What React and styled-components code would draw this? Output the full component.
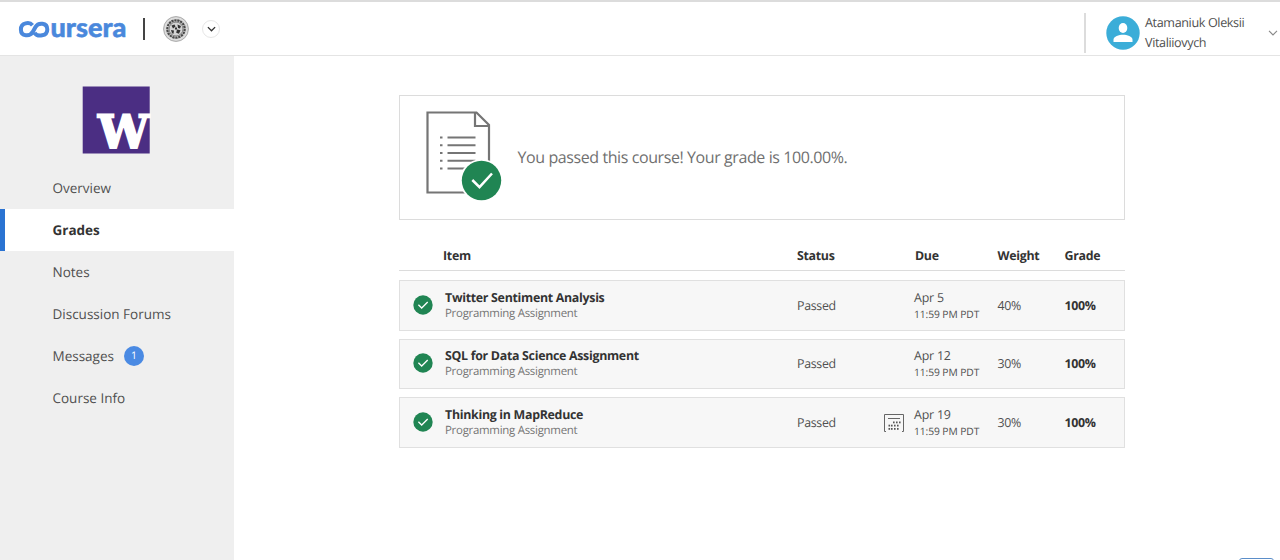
import React from 'react';
import styled, { createGlobalStyle } from 'styled-components';

const GlobalStyle = createGlobalStyle`
  * { box-sizing: border-box; }
  body {
    margin: 0;
    background: #fff;
    color: #505050;
    font-family: "Open Sans", "Noto Sans", sans-serif;
    text-rendering: geometricPrecision;
    overflow: hidden;
  }
  svg { display: block; flex: none; overflow: visible; }
`;

const Page = styled.div`
  height: 560px;
  display: flex;
  flex-direction: column;
  overflow: hidden;
`;

const Header = styled.header`
  flex: none;
  height: 56px;
  display: flex;
  align-items: flex-start;
  border-top: 2px solid #dcdcdc;
  border-bottom: 1px solid #e4e4e4;
`;

const Brand = styled.div`
  display: flex;
  align-items: center;
  padding: 14px 0 0 18px;
  height: 40px;
`;

const Divider = styled.span`
  width: 2px;
  height: 22px;
  margin: 0 18px 0 11px;
  background: #444;
`;

const RoundButton = styled.button`
  width: 18px;
  height: 18px;
  margin-left: 13px;
  padding: 0;
  display: flex;
  align-items: center;
  justify-content: center;
  border: 1px solid #e6e6e6;
  border-radius: 50%;
  background: #fff;
`;

const Account = styled.div`
  margin: 11px 0 0 auto;
  width: 196px;
  height: 40px;
  padding-left: 20px;
  display: flex;
  align-items: center;
  border-left: 2px solid #dcdcdc;
`;

const AccountName = styled.div`
  width: 123px;
  margin: 0 0 0 5px;
  font-size: 12.6px;
  letter-spacing: -0.37px;
  line-height: 20px;
`;

const Body = styled.div`
  flex: 1;
  min-height: 0;
  display: flex;
`;

const Sidebar = styled.aside`
  flex: none;
  width: 234px;
  padding-top: 30px;
  background: #efefef;
`;

const SchoolLogo = styled.div`
  width: 68px;
  margin: 0 0 13px 82px;
`;

const NavItem = styled.a`
  height: 42px;
  padding-left: ${(p) => (p.$active ? 47.5 : 52.5)}px;
  display: flex;
  align-items: center;
  border-left: ${(p) => (p.$active ? '5px solid #2a73d2' : 'none')};
  background: ${(p) => (p.$active ? '#fff' : 'transparent')};
  color: ${(p) => (p.$active ? '#333' : '#505050')};
  font-size: 13.5px;
  font-weight: ${(p) => (p.$active ? 700 : 400)};
`;

const Count = styled.span`
  width: 20px;
  height: 20px;
  margin-left: 10px;
  display: flex;
  align-items: center;
  justify-content: center;
  border-radius: 50%;
  background: #4a8ae3;
  color: #fff;
  font-size: 10.5px;
`;

const Main = styled.main`
  flex: none;
  width: 726px;
  margin-left: 165px;
  padding-top: 39px;
`;

const Banner = styled.section`
  height: 125px;
  display: flex;
  align-items: center;
  padding: 0 0 5px 25px;
  border: 1px solid #dcdcdc;
`;

const BannerText = styled.p`
  margin: 3px 0 0 14.5px;
  color: #707070;
  font-size: 16px;
  letter-spacing: -0.41px;
`;

const columns = '45px 352px 87px 30px 83.5px 67px 1fr';

const TableHead = styled.div`
  height: 51px;
  padding: 26px 0 0 1px;
  display: grid;
  grid-template-columns: ${columns};
  border-bottom: 1px solid #dcdcdc;
  color: #333;
  font-size: 12.4px;
  font-weight: 700;
  letter-spacing: -0.3px;
  line-height: 20px;
`;

const HeadCell = styled.span`
  grid-column: ${(p) => p.$column};
  margin-left: ${(p) => p.$shift || 0}px;
`;

const Rows = styled.div`
  padding-top: 9px;
  display: flex;
  flex-direction: column;
  gap: 8px;
`;

const Row = styled.div`
  height: 50.65px;
  display: grid;
  grid-template-columns: ${columns};
  align-items: center;
  border: 1px solid #e0e0e0;
  background: #f7f7f7;
  font-size: 12.4px;
  letter-spacing: -0.3px;
`;

const StatusIcon = styled.div`
  padding: 0 0 1px 12.5px;
`;

const Title = styled.div`
  color: #333;
  font-weight: 700;
  line-height: 17px;
`;

const Kind = styled.div`
  color: #757575;
  font-size: 11.45px;
  letter-spacing: -0.27px;
  line-height: 16px;
`;

const Due = styled.div`
  padding-top: 2px;
`;

const DueDate = styled.div`
  letter-spacing: -0.2px;
  line-height: 18px;
`;

const DueTime = styled.div`
  font-size: 10.3px;
  letter-spacing: -0.1px;
  line-height: 17px;
`;

const Grade = styled.span`
  color: #333;
  font-weight: 700;
`;

const HelpButton = styled.button`
  position: fixed;
  left: 1239px;
  top: 558px;
  width: 35px;
  height: 24px;
  padding: 0;
  border: 1px solid #5b8ec9;
  border-radius: 3px;
  background: #fff;
`;

function Wordmark() {
  return (
    <svg width="114" height="32" viewBox="0 -4 114 32">
      <path
        d="M14.500 8.200C11.500 4.700 2.900 5.500 2.900 12.400c0 7.300 9.200 7.500 12.100 2.100l2.500-4.500c2.900-5 11.800-4.400 11.800 2.400 0 6.900-9.800 7.800-12.800 3.400"
        fill="none"
        stroke="#4a88dc"
        strokeWidth="4"
      />
      <text
        x="32.500"
        y="19.500"
        fill="#4a88dc"
        stroke="#4a88dc"
        strokeWidth=".5"
        fontFamily="Lato"
        fontWeight="900"
        fontSize="26.500"
        textLength="76"
        lengthAdjust="spacingAndGlyphs"
      >
        ursera
      </text>
    </svg>
  );
}

function Seal() {
  return (
    <svg width="26" height="26" viewBox="0 0 26 26">
      <circle cx="13" cy="13" r="12.4" fill="#dcdcdc" stroke="#aaa" strokeWidth="1" />
      <circle cx="13" cy="13" r="8.7" fill="none" stroke="#4a4a4a" strokeWidth="2.2" strokeDasharray="2.3 .7" />
      <circle cx="13" cy="13" r="7" fill="#d4d4d4" stroke="#666" strokeWidth=".8" />
      <path
        d="M8.5 9.5l3-1 1 2-2.5 2zM14.5 8.5l3.5 1.5-1 2.5-2-.5zM8 14l3 .5-.5 3.2-1.5-.4zM14 13.5l3.5.8-1.5 3.5-2.8-1zM12 11.5h2v2h-2z"
        fill="#333"
      />
    </svg>
  );
}

function Avatar() {
  return (
    <svg width="34" height="34" viewBox="0 0 34 34">
      <circle cx="17" cy="17" r="16.7" fill="#3badd8" />
      <ellipse cx="17" cy="12" rx="4.3" ry="5" fill="#fff" />
      <path d="M7.5 26v-2.2c0-3.2 5.4-5 9.5-5s9.5 1.8 9.5 5V26z" fill="#fff" />
    </svg>
  );
}

function Chevron({ color, width = 9, weight = 1.5 }) {
  return (
    <svg width={width} height="6" viewBox="0 0 10 6" fill="none" stroke={color} strokeWidth={weight}>
      <path d="M1 .9l4 4 4-4" />
    </svg>
  );
}

function CheckCircle({ size }) {
  return (
    <svg width={size} height={size} viewBox="0 0 20 20">
      <circle cx="10" cy="10" r="9.7" fill="#208553" />
      <path d="M5.4 9.7l3.3 3.3 6-6" fill="none" stroke="#fff" strokeWidth="1.3" />
    </svg>
  );
}

function PassedDocument() {
  const lines = [27.5, 35.3, 43, 50.7, 58.4];
  return (
    <svg width="78" height="91" viewBox="0 0 78 91" fill="none" stroke="#757575">
      <path d="M2.5 2.5h49L64 15v67.500H2.500z" strokeWidth="2.200" />
      <path d="M50 2.500V16h14" strokeWidth="2.200" />
      {lines.map((y) => (
        <path key={y} d={`M15 ${y}h2.500M22.500 ${y}h28`} strokeWidth="2" />
      ))}
      <circle cx="56.500" cy="70.500" r="21.500" fill="#fff" stroke="none" />
      <circle cx="56.500" cy="70.500" r="19.700" fill="#208553" stroke="none" />
      <path d="M47.300 70l7.200 7.200L67 63.500" stroke="#fff" strokeWidth="2.500" />
    </svg>
  );
}

function CalendarIcon() {
  const dots = [
    [10, 9.5], [13, 9.5], [16, 9.5],
    [5.5, 12.7], [8, 12.7], [11, 12.7], [14, 12.7],
    [5.5, 16], [8, 16], [11, 16], [14, 16],
  ];
  return (
    <svg width="20" height="20" viewBox="0 0 20 20">
      <path d="M2 18.5H.5V1.500h19v17H18M4 5.500h12" fill="none" stroke="#666" />
      {dots.map(([x, y]) => (
        <rect key={`${x}-${y}`} x={x - 1} y={y - 1} width="1.600" height="1.800" fill="#555" />
      ))}
    </svg>
  );
}

const nav = [
  { label: 'Overview' },
  { label: 'Grades', active: true },
  { label: 'Notes' },
  { label: 'Discussion Forums' },
  { label: 'Messages', count: 1 },
  { label: 'Course Info' },
];

const assignments = [
  { title: 'Twitter Sentiment Analysis', due: 'Apr 5', weight: '40%' },
  { title: 'SQL for Data Science Assignment', due: 'Apr 12', weight: '30%' },
  { title: 'Thinking in MapReduce', due: 'Apr 19', weight: '30%', calendar: true },
];

export default function App() {
  return (
    <Page>
      <GlobalStyle />
      <Header>
        <Brand>
          <Wordmark />
          <Divider />
          <Seal />
          <RoundButton aria-label="Choose program">
            <Chevron color="#333" />
          </RoundButton>
        </Brand>
        <Account>
          <Avatar />
          <AccountName>Atamaniuk Oleksii Vitaliiovych</AccountName>
          <Chevron color="#888" width={10} weight={1.1} />
        </Account>
      </Header>
      <Body>
        <Sidebar>
          <SchoolLogo>
            <svg width="68" height="68" viewBox="0 0 68 68">
              <rect x=".7" y=".5" width="67" height="67" fill="#4b2e83" />
              <text
                x="16"
                y="61.5"
                fill="#fff"
                stroke="#fff"
                strokeWidth="2"
                fontFamily="DejaVu Serif"
                fontWeight="700"
                fontSize="46"
                textLength="51"
                lengthAdjust="spacingAndGlyphs"
              >
                W
              </text>
            </svg>
          </SchoolLogo>
          {nav.map((item) => (
            <NavItem key={item.label} $active={item.active}>
              {item.label}
              {item.count && <Count>{item.count}</Count>}
            </NavItem>
          ))}
        </Sidebar>
        <Main>
          <Banner>
            <PassedDocument />
            <BannerText>You passed this course! Your grade is 100.00%.</BannerText>
          </Banner>
          <TableHead>
            <HeadCell $column={2} $shift={-2}>Item</HeadCell>
            <HeadCell $column={3}>Status</HeadCell>
            <HeadCell $column={5} $shift={1}>Due</HeadCell>
            <HeadCell $column={6}>Weight</HeadCell>
            <HeadCell $column={7}>Grade</HeadCell>
          </TableHead>
          <Rows>
            {assignments.map((a) => (
              <Row key={a.title}>
                <StatusIcon>
                  <CheckCircle size={20} />
                </StatusIcon>
                <div>
                  <Title>{a.title}</Title>
                  <Kind>Programming Assignment</Kind>
                </div>
                <span>Passed</span>
                <div>{a.calendar && <CalendarIcon />}</div>
                <Due>
                  <DueDate>{a.due}</DueDate>
                  <DueTime>11:59 PM PDT</DueTime>
                </Due>
                <span>{a.weight}</span>
                <Grade>100%</Grade>
              </Row>
            ))}
          </Rows>
        </Main>
      </Body>
      <HelpButton aria-label="Help" />
    </Page>
  );
}
